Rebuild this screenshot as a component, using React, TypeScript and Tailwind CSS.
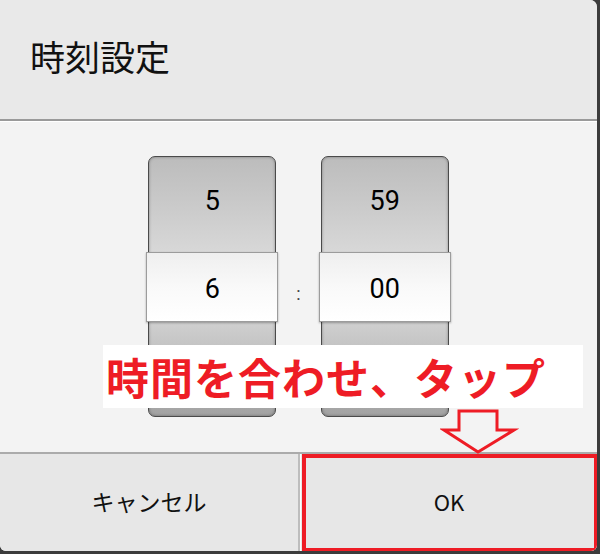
import React from "react";

const jp = "font-['Noto_Sans_CJK_JP','Noto_Sans',sans-serif]";

function Picker({ top, value }: { top: string; value: string }) {
  return (
    <div className="relative w-[128px] h-[261px]">
      <div className="absolute inset-0 rounded-[7px] border-[1.5px] border-[#4a4a4a] bg-gradient-to-b from-[#bcbcbc] via-[#e2e2e2] to-[#a2a2a2] shadow-[inset_0_0_3px_rgba(0,0,0,0.35)]" />
      <div className="absolute left-0 right-0 top-0 h-[96px] flex items-center justify-center text-[27px] text-black font-['Roboto',sans-serif] pb-[6px]">
        {top}
      </div>
      <div className="absolute left-[-2px] right-[-2px] top-[96px] h-[70px] flex items-center justify-center border border-[#9c9c9c] bg-gradient-to-b from-[#efefef] via-[#f9f9f9] to-[#ffffff] shadow-[0_1px_2px_rgba(0,0,0,0.3)] text-[27px] text-black font-['Roboto',sans-serif] pt-[4px]">
        {value}
      </div>
    </div>
  );
}

export default function App() {
  return (
    <div className="w-[600px] h-[554px] bg-[#3c3c3c] overflow-hidden">
      <div className="relative w-[597px] h-[551px] rounded-tr-[7px] rounded-b-[6px] overflow-hidden flex flex-col bg-[#f2f2f2]">
        <div className="h-[121px] shrink-0 bg-[#e9e9e9] border-b-2 border-[#9a9a9a] flex items-center pl-[30px]">
          <h1 className={`${jp} text-[35px] text-[#111] leading-none -mt-[9px]`}>時刻設定</h1>
        </div>
        <div className="flex-1 border-t border-white bg-[#f3f3f3] flex justify-center items-start pt-[34px] gap-[20px]">
          <Picker top="5" value="6" />
          <span className="mt-[124px] text-[18px] text-[#444] font-['Roboto',sans-serif]">:</span>
          <Picker top="59" value="00" />
        </div>
        <div className="h-[99px] shrink-0 border-t-2 border-[#ababab] bg-[#e7e7e7] flex">
          <button className={`${jp} w-[300px] h-full text-[23px] text-[#111] border-r-2 border-[#bdbdbd] pb-[2px]`}>キャンセル</button>
          <button className={`${jp} flex-1 h-full text-[22px] text-[#111] border-l border-white pb-[2px]`}>OK</button>
        </div>

        <div className="absolute left-[103px] top-[345px] w-[480px] h-[63px] bg-white flex items-center pl-[3px]">
          <span className={`${jp} text-[43px] font-bold text-[#ee1c25] leading-none tracking-[1px]`}>時間を合わせ、タップ</span>
        </div>

        <svg className="absolute left-[440px] top-[408px]" width="80" height="48" viewBox="0 0 80 48">
          <polygon points="19,3 57,3 57,22 74,22 38,44 4,22 19,22" fill="#f3f3f3" stroke="#ee1c25" strokeWidth="3" strokeLinejoin="miter" />
        </svg>

        <div className="absolute left-[302px] top-[454px] w-[296px] h-[98px] border-4 border-[#ee1c25]" />
      </div>
    </div>
  );
}
